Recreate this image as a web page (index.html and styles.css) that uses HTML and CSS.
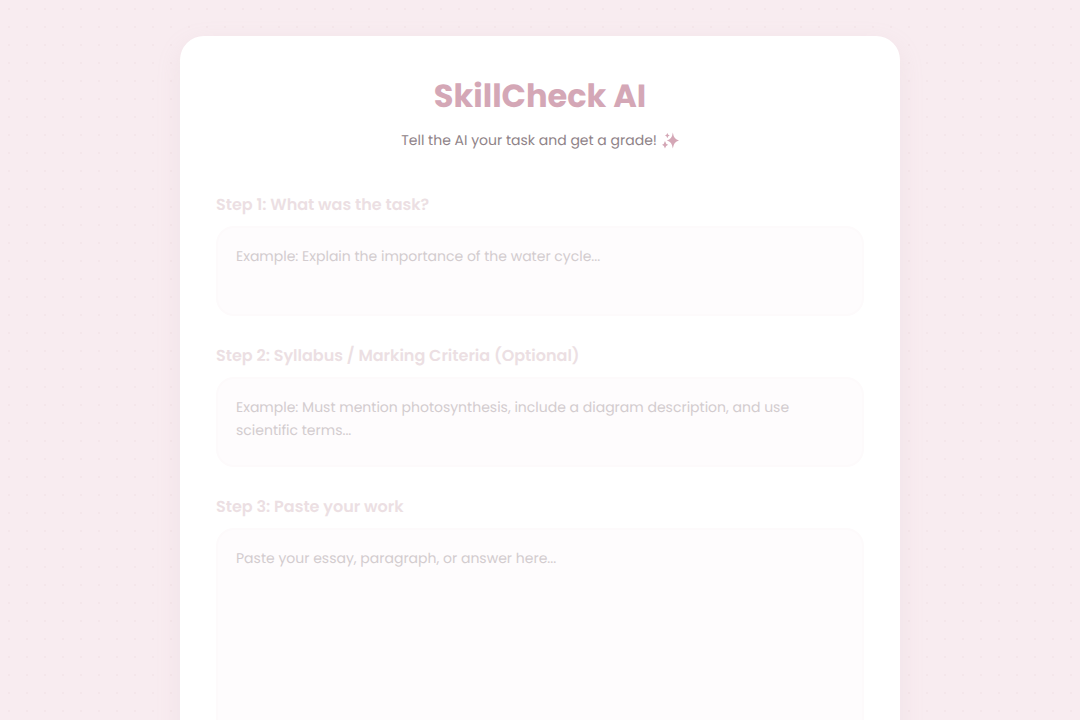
FILE: index.html
```html
<!DOCTYPE html>
<html lang="en">
<head>
    <meta charset="UTF-8">
    <meta name="viewport" content="width=device-width, initial-scale=1.0">
    <title>SkillCheck AI</title>
    <link rel="stylesheet" href="styles.css">
</head>
<body>
    <main class="container">
        <header>
            <h1>SkillCheck AI</h1>
            <p class="subtitle">
                Tell the AI your task and get a grade!
                <svg class="sparkles" viewBox="0 0 16 16" aria-hidden="true">
                    <path d="M10.200 0.500 Q11 7 16 8 Q11 9 10.200 15.500 Q9.400 9 4.600 8 Q9.400 7 10.200 0.500Z"/>
                    <path d="M2.800 8.500 Q3.500 11.500 5.800 12 Q3.500 12.500 2.800 15.500 Q2.200 12.500 0 12 Q2.200 11.500 2.800 8.500Z"/>
                    <path d="M5 1 Q5.600 3 7.300 3.400 Q5.600 3.800 5 5.800 Q4.500 3.800 2.800 3.400 Q4.500 3 5 1Z"/>
                </svg>
            </p>
        </header>

        <form>
            <!-- Step 1 -->
            <div class="step">
                <label for="task">Step 1: What was the task?</label>
                <textarea id="task" placeholder="Example: Explain the importance of the water cycle..."></textarea>
            </div>

            <!-- Step 2 -->
            <div class="step">
                <label for="criteria">Step 2: Syllabus / Marking Criteria (Optional)</label>
                <textarea id="criteria" placeholder="Example: Must mention photosynthesis, include a diagram description, and use scientific terms..."></textarea>
            </div>

            <!-- Step 3 -->
            <div class="step">
                <label for="work">Step 3: Paste your work</label>
                <textarea id="work" class="large" placeholder="Paste your essay, paragraph, or answer here..."></textarea>
            </div>
        </form>
    </main>
</body>
</html>
```
FILE: styles.css
```css
* {
    box-sizing: border-box;
}

body {
    margin: 0;
    padding: 36px 20px;
    font-family: Poppins, Inter, sans-serif;
    text-rendering: geometricPrecision;
    color: #8f8388;
    background-color: #f8ecf0;
    background-image: radial-gradient(circle, #f4e6ea 1px, transparent 1px);
    background-size: 18px 18px;
}

.container {
    max-width: 720px;
    margin: 0 auto;
    padding: 36px;
    background: #fff;
    border-radius: 24px;
    box-shadow: 0 8px 24px rgba(200, 167, 178, 0.15);
}

header {
    margin-bottom: 40px;
    text-align: center;
}

h1 {
    margin: 0;
    font-size: 32px;
    line-height: 50px;
    font-weight: 700;
    color: #d4a7b6;
}

.subtitle {
    margin: 6px 0 0;
    font-size: 14px;
    line-height: 24px;
}

.sparkles {
    width: 17px;
    height: 17px;
    margin-left: 1px;
    vertical-align: -4px;
    fill: #d4a7b6;
}

.step {
    margin-bottom: 27px;
}

label {
    display: block;
    margin-bottom: 8px;
    font-size: 16px;
    line-height: 26px;
    font-weight: 600;
    color: #ecdfe3;
}

textarea {
    display: block;
    width: 100%;
    height: 90px;
    padding: 17px 18px;
    font-family: inherit;
    font-size: 14px;
    line-height: 23px;
    text-rendering: inherit;
    color: #8f8388;
    background: #fefcfd;
    border: 2px solid #fdfafb;
    border-radius: 18px;
    resize: none;
    outline: none;
}

textarea.large {
    height: 220px;
}

textarea::placeholder {
    color: #d3cccf;
    opacity: 1;
}
```
